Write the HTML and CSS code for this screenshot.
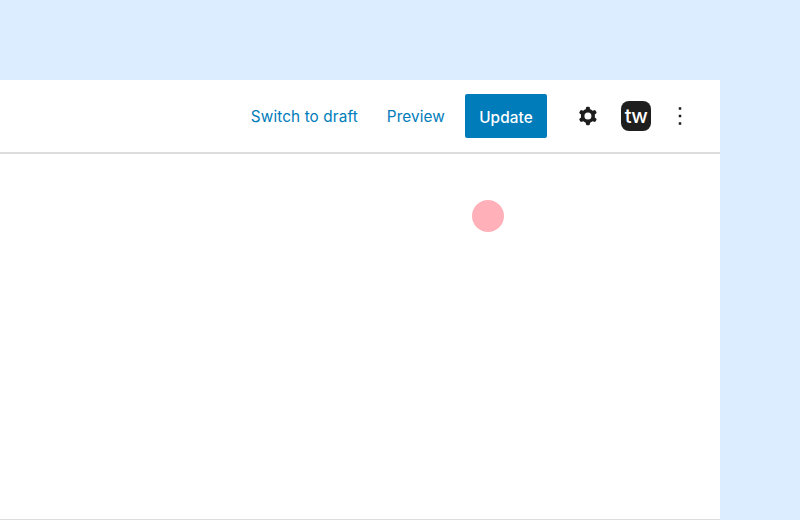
FILE: index.html
```html
<!DOCTYPE html>
<html lang="en">
<head>
<meta charset="utf-8">
<title>Editor</title>
<link rel="stylesheet" href="styles.css">
</head>
<body>
<main class="window">
  <header class="toolbar">
    <a class="link link-draft">Switch to draft</a>
    <a class="link link-preview">Preview</a>
    <button class="update">Update</button>
    <svg class="icon cog" viewBox="0 0 24 24" width="28" height="28"><path fill-rule="evenodd" clip-rule="evenodd" d="M10.289 4.836A1 1 0 0111.275 4h1.306a1 1 0 01.987.836l.244 1.466c.787.26 1.503.679 2.108 1.218l1.393-.522a1 1 0 011.216.437l.653 1.13a1 1 0 01-.23 1.273l-1.148.944a6.025 6.025 0 010 2.435l1.149.946a1 1 0 01.23 1.272l-.653 1.13a1 1 0 01-1.216.437l-1.394-.522c-.605.54-1.32.958-2.108 1.218l-.244 1.466a1 1 0 01-.987.836h-1.306a1 1 0 01-.986-.836l-.244-1.466a5.995 5.995 0 01-2.108-1.218l-1.394.522a1 1 0 01-1.217-.436l-.653-1.131a1 1 0 01.23-1.272l1.149-.946a6.026 6.026 0 010-2.435l-1.148-.944a1 1 0 01-.23-1.272l.653-1.131a1 1 0 011.217-.437l1.393.522a5.994 5.994 0 012.108-1.218l.244-1.466zM14.929 12a3 3 0 11-6 0 3 3 0 016 0z"/></svg>
    <div class="logo">tw</div>
    <svg class="icon more" viewBox="0 0 24 24" width="30" height="30"><path d="M13 19h-2v-2h2v2zm0-6h-2v-2h2v2zm0-6h-2V5h2v2z"/></svg>
  </header>
  <div class="canvas"></div>
</main>
<div class="cursor"></div>
</body>
</html>
```

FILE: styles.css
```css
html, body { height: 100%; }
body {
  margin: 0;
  box-sizing: border-box;
  padding: 80px 80px 0 0;
  background: #dbedff;
  font-family: Inter, "Liberation Sans", sans-serif;
  display: flex;
  overflow: hidden;
}
.window {
  flex: 1;
  display: flex;
  flex-direction: column;
  background: #fff;
  border-bottom: 1px solid #ddd;
}
.toolbar {
  height: 72px;
  flex: none;
  display: flex;
  align-items: center;
  justify-content: flex-end;
  border-bottom: 2px solid #ddd;
}
.link {
  color: #007cba;
  font-size: 15.3px;
  line-height: 22px;
  letter-spacing: 0.12px;
  padding-top: 2px;
}
.link-draft { margin-right: 29px; }
.link-preview { margin-right: 20px; }
.update {
  width: 82px;
  height: 44px;
  padding: 2px 0 0;
  border: 0;
  border-radius: 2px;
  background: #007cba;
  color: #fff;
  font: 500 15.3px Inter, "Liberation Sans", sans-serif;
  letter-spacing: 0.12px;
  margin-right: 27px;
}
.icon { display: block; fill: #1e1e1e; flex: none; }
.cog { margin-right: 19px; }
.logo {
  width: 30px;
  height: 30px;
  border-radius: 8px;
  background: #1e1e1e;
  color: #fff;
  font-size: 20px;
  font-weight: 500;
  line-height: 30px;
  letter-spacing: -0.6px;
  text-align: center;
  margin-right: 14px;
}
.more { margin-right: 25px; }
.canvas { flex: 1; }
.cursor {
  position: absolute;
  left: 472px;
  top: 200px;
  width: 32px;
  height: 32px;
  border-radius: 50%;
  background: #ffb0b8;
}
```
